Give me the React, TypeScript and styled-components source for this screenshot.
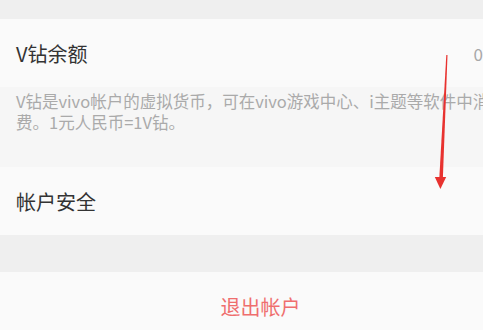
import styled, { createGlobalStyle } from "styled-components";

const GlobalStyle = createGlobalStyle`
  html, body {
    margin: 0;
    padding: 0;
    overflow: hidden;
    background: #f0f0f0;
  }
  body {
    font-family: "Noto Sans CJK SC", "Noto Sans", sans-serif;
  }
`;

const App = () => {
  return (
    <>
      <GlobalStyle />
      <Screen>
        <Gap $height={19} />
        <Row>
          <span className="row-title">V钻余额</span>
          <span className="row-value">0</span>
        </Row>
        <Description>
          <span className="desc-line">V钻是vivo帐户的虚拟货币，可在vivo游戏中心、i主题等软件中消</span>
          <span className="desc-line">费。1元人民币=1V钻。</span>
        </Description>
        <Row>
          <span className="row-title">帐户安全</span>
        </Row>
        <Gap $height={37} />
        <LogoutRow>退出帐户</LogoutRow>
        {/* 영상에 그려진 빨간 화살표 */}
        <Arrow width="483" height="330" viewBox="0 0 483 330">
          <polygon points="446.3,55 447.5,55 442.8,180 439.2,180" fill="#e8322f" />
          <polygon points="434.8,177 446.2,177 440.4,189" fill="#e8322f" />
        </Arrow>
      </Screen>
    </>
  );
};

const Screen = styled.div`
  position: relative;
  width: 521px;
  height: 330px;
  display: flex;
  flex-direction: column;
  background-color: #f0f0f0;
`;

const Gap = styled.div<{ $height: number }>`
  height: ${({ $height }) => $height}px;
  flex-shrink: 0;
  background-color: #efefef;
`;

const Row = styled.div`
  height: 68px;
  flex-shrink: 0;
  display: flex;
  align-items: center;
  justify-content: space-between;
  padding: 0 38px 0 16px;
  background-color: #fafafa;

  .row-title {
    font-size: 20px;
    color: #333333;
  }

  .row-value {
    font-size: 17px;
    color: #a8a8a8;
  }
`;

const Description = styled.div`
  height: 80px;
  flex-shrink: 0;
  box-sizing: border-box;
  padding: 4px 16px 0;
  display: flex;
  flex-direction: column;
  gap: 1px;
  background-color: #f6f6f6;

  .desc-line {
    display: block;
    height: 20px;
    font-size: 16.5px;
    line-height: 20px;
    color: #aaaaaa;
    white-space: nowrap;
  }
`;

const LogoutRow = styled.div`
  height: 68px;
  flex-shrink: 0;
  display: flex;
  align-items: center;
  justify-content: center;
  font-size: 20px;
  color: #ef6e6e;
  background-color: #fafafa;
`;

const Arrow = styled.svg`
  position: absolute;
  left: 0;
  top: 0;
  pointer-events: none;
`;

export default App;
